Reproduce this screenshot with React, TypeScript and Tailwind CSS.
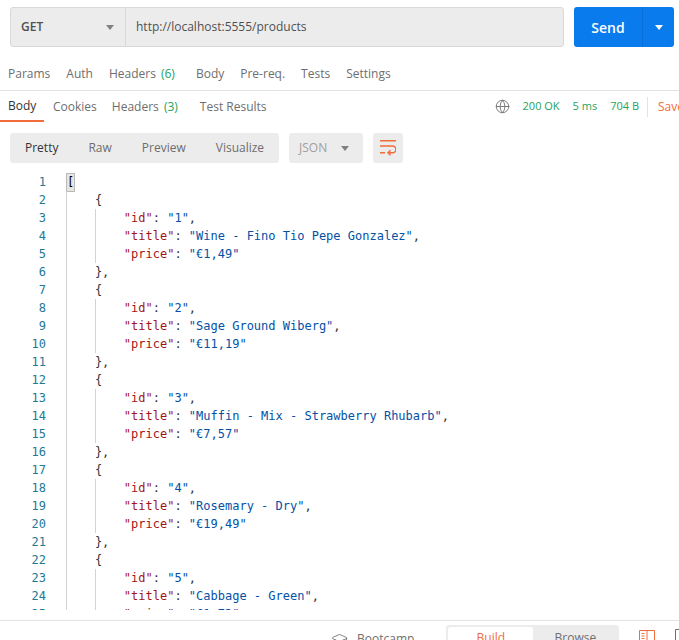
import { Globe, GraduationCap } from 'lucide-react'

const products = [
  { id: '1', title: 'Wine - Fino Tio Pepe Gonzalez', price: '€1,49' },
  { id: '2', title: 'Sage Ground Wiberg', price: '€11,19' },
  { id: '3', title: 'Muffin - Mix - Strawberry Rhubarb', price: '€7,57' },
  { id: '4', title: 'Rosemary - Dry', price: '€19,49' },
  { id: '5', title: 'Cabbage - Green', price: '€1,73' },
]

function Key({ name, value, comma }: { name: string; value: string; comma?: boolean }) {
  return (
    <>
      <span className="text-[#a31515]">"{name}"</span>
      <span>: </span>
      <span className="text-[#0451a5]">"{value}"</span>
      {comma && <span>,</span>}
    </>
  )
}

function Line({ n, depth, children }: { n: number; depth: number; children: React.ReactNode }) {
  return (
    <div className="flex h-[18px] items-center leading-[18px] whitespace-pre">
      <span className="w-[46px] shrink-0 text-right text-[#237893]">{n}</span>
      <span className="w-[20px] shrink-0" />
      {Array.from({ length: depth }).map((_, i) => (
        <span key={i} className="h-[18px] w-[28.9px] shrink-0 border-l border-[#d3d3d3]" />
      ))}
      <span>{children}</span>
    </div>
  )
}

function Caret({ className }: { className: string }) {
  return <span className={`h-0 w-0 border-x-[4px] border-t-[5px] border-x-transparent ${className}`} />
}

function Code() {
  let n = 1
  const rows: React.ReactNode[] = [
    <div key="open" className="flex h-[18px] items-center leading-[18px]">
      <span className="w-[46px] shrink-0 text-right text-[#237893]">{n++}</span>
      <span className="w-[20px] shrink-0" />
      <span className="ml-px flex h-[17px] w-[7px] items-center justify-center bg-[#e4e8e0] text-black outline outline-[#b9b9b9]">[</span>
    </div>,
  ]
  products.forEach((p) => {
    rows.push(<Line key={n} n={n++} depth={1}>{'{'}</Line>)
    rows.push(<Line key={n} n={n++} depth={2}><Key name="id" value={p.id} comma /></Line>)
    rows.push(<Line key={n} n={n++} depth={2}><Key name="title" value={p.title} comma /></Line>)
    rows.push(<Line key={n} n={n++} depth={2}><Key name="price" value={p.price} /></Line>)
    rows.push(<Line key={n} n={n++} depth={1}>{'},'}</Line>)
  })
  return (
    <div className="mt-[10px] h-[437px] shrink-0 overflow-hidden font-['DejaVu_Sans_Mono',monospace] text-[12px] text-[#333]">
      {rows}
    </div>
  )
}

export default function App() {
  return (
    <div className="flex h-[640px] w-[679px] flex-col overflow-hidden bg-white font-['Open_Sans',sans-serif] text-[12px] text-[#6e6e6e]">
      <div className="flex shrink-0 pt-[7px] pr-[5px] pl-[10px]">
        <div className="flex h-[40px] w-[554px] rounded-[3px] border border-[#d9d9d9] bg-[#ececec]">
          <div className="flex w-[115px] items-center justify-between border-r border-[#d9d9d9] pr-[11px] pl-[10px] font-semibold text-[#505050]">
            GET
            <Caret className="border-t-[#808080]" />
          </div>
          <div className="-mt-px flex items-center pl-[10px] text-[#505050]">http://localhost:5555/products</div>
        </div>
        <div className="ml-[10px] flex h-[40px] w-[100px] rounded-[3px] bg-[#097bed] text-white">
          <div className="flex w-[69px] items-center justify-center border-r border-[#0a6fd4] text-[14px] font-semibold">Send</div>
          <div className="flex flex-1 items-center justify-center">
            <Caret className="border-t-white" />
          </div>
        </div>
      </div>

      <div className="mt-[14px] flex h-[26px] shrink-0 items-center pl-[8px]">
        <span>Params</span>
        <span className="ml-[16px]">Auth</span>
        <span className="ml-[16px]">Headers <span className="ml-[2px] text-[#26a35a]">(6)</span></span>
        <span className="ml-[21px]">Body</span>
        <span className="ml-[16px]">Pre-req.</span>
        <span className="ml-[16px]">Tests</span>
        <span className="ml-[16px]">Settings</span>
      </div>
      <div className="mt-[3px] h-px shrink-0 bg-[#e3e3e3]" />

      <div className="flex h-[31px] shrink-0 items-center">
        <span className="flex h-[31px] w-[44px] items-center border-b-[2px] border-[#f26b3a] pl-[8px] text-[#333]">Body</span>
        <span className="ml-[9px]">Cookies</span>
        <span className="ml-[15px]">Headers <span className="ml-[2px] text-[#26a35a]">(3)</span></span>
        <span className="ml-[22px]">Test Results</span>
        <div className="ml-auto flex items-center">
          <Globe size={15} strokeWidth={1.4} className="text-[#6e6e6e]" />
          <span className="ml-[13px] text-[11px] text-[#26a35a]">200 OK</span>
          <span className="ml-[13px] text-[11px] text-[#26a35a]">5 ms</span>
          <span className="ml-[13px] text-[11px] text-[#26a35a]">704 B</span>
          <span className="ml-[8px] h-[20px] w-px bg-[#e3e3e3]" />
          <span className="ml-[10px] w-[21px] overflow-hidden text-[#f26b3a]">Save</span>
        </div>
      </div>

      <div className="mt-[11px] flex h-[30px] shrink-0 pl-[10px]">
        <div className="flex w-[269px] items-center rounded-[3px] bg-[#ececec] pl-[15px]">
          <span className="text-[#333]">Pretty</span>
          <span className="ml-[30px]">Raw</span>
          <span className="ml-[30px]">Preview</span>
          <span className="ml-[30px]">Visualize</span>
        </div>
        <div className="ml-[10px] flex w-[74px] items-center justify-between rounded-[3px] bg-[#ececec] pr-[14px] pl-[10px] text-[#a0a0a0]">
          JSON
          <Caret className="border-t-[#808080]" />
        </div>
        <div className="ml-[10px] flex w-[30px] items-center justify-center rounded-[3px] bg-[#ececec]">
          <svg width="16" height="16" viewBox="0 0 16 16" fill="none" stroke="#f26b3a" strokeWidth="1.5">
            <path d="M0 .75h16M0 6h12.500a3.400 3.400 0 0 1 0 6.800H8M0 12.800h5" />
            <path d="M10.500 10.300 8 12.800l2.500 2.500" />
          </svg>
        </div>
      </div>

      <Code />

      <div className="mt-[10px] flex flex-1 items-start border-t border-[#e3e3e3] pt-[4px]">
        <div className="mt-[5px] ml-[331px] flex items-center">
          <GraduationCap size={17} strokeWidth={1.2} className="text-[#6e6e6e]" />
          <span className="ml-[9px]">Bootcamp</span>
        </div>
        <div className="ml-[32px] flex h-[24px] w-[173px] shrink-0 rounded-[3px] bg-[#ececec] p-[2px] pb-0">
          <span className="w-[85px] rounded-[3px] bg-white pt-[2px] text-center text-[#f26b3a]">Build</span>
          <span className="flex-1 pt-[2px] text-center">Browse</span>
        </div>
        <svg className="mt-[5px] ml-[20px] shrink-0" width="16" height="16" viewBox="0 0 16 16" fill="none" stroke="#f26b3a" strokeWidth="1">
          <path d="M.5.500h15v15H.5zM8 .500v15M2.500 3.500h3M2.500 6h3M2.500 8.500h3" />
        </svg>
        <svg className="mt-[4px] ml-[20px] shrink-0" width="16" height="16" viewBox="0 0 16 16" fill="none" stroke="#6e6e6e" strokeWidth="1">
          <path d="M.5.500h13v15H.5z" />
        </svg>
      </div>
    </div>
  )
}
